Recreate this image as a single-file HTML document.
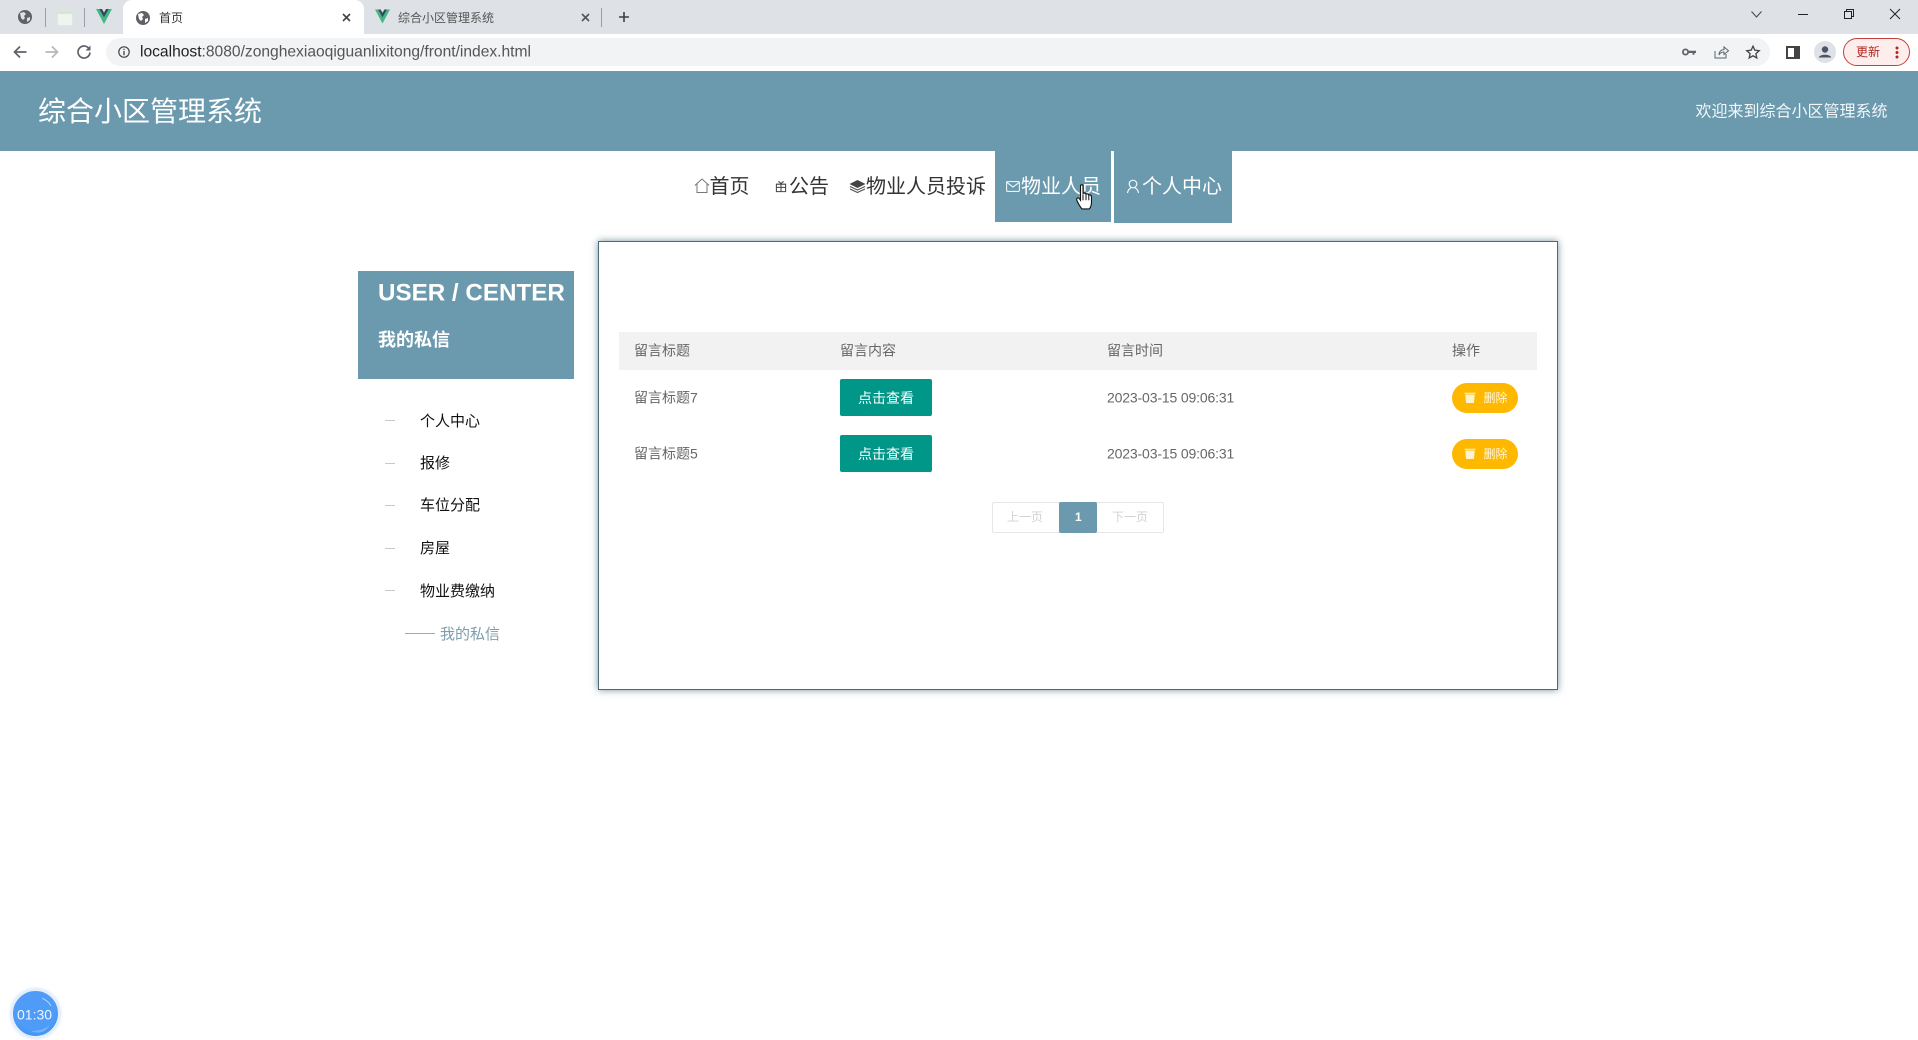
<!DOCTYPE html>
<html lang="zh"><head><meta charset="utf-8"><title>首页</title>
<style>
html,body{margin:0;padding:0;width:1918px;height:1040px;overflow:hidden;background:#fff;}
body{position:relative;font-family:"Liberation Sans","Noto Sans CJK SC",sans-serif;}
.a{position:absolute;white-space:nowrap;}
.t{position:absolute;white-space:nowrap;transform:translateY(-50%);line-height:1.2;}
svg{position:absolute;overflow:visible;}
.btn{position:absolute;left:840px;width:92px;height:37px;background:#009688;border-radius:2px;color:#fff;font-size:14px;line-height:38px;text-align:center;}
.del{position:absolute;left:1452px;width:66px;height:30px;background:#FFB800;border-radius:15px;}
.g{color:#666;font-size:14px;}
.m{color:#111;font-size:15px;}
.dash{position:absolute;left:385px;width:10px;height:1px;background:#c4c9cc;}
</style></head><body>

<!-- tab strip -->
<div class="a" style="left:0;top:0;width:1918px;height:34px;background:#dee1e6"></div>
<svg style="left:18px;top:10px" width="14" height="14" viewBox="0 0 14 14"><circle cx="7" cy="7" r="7" fill="#5f6368"/><path d="M2 3 L6 2 L8 4 L6 6 L7 8 L5 10 L3 8 Z M9 8 L12 7 L12 10 L9 12 Z" fill="#dee1e6"/></svg>
<div class="a" style="left:45px;top:8px;width:1px;height:19px;background:#9aa0a6"></div>
<div class="a" style="left:57px;top:10px;width:14px;height:14px;background:linear-gradient(#d4e6d6 0 3px,#eef5ef 3px);border:1px solid #dfe6e0"></div>
<div class="a" style="left:84px;top:8px;width:1px;height:19px;background:#9aa0a6"></div>
<svg style="left:96px;top:9px" width="16" height="15" viewBox="0 0 16 15"><path d="M0 0 L3.2 0 L8 8.5 L12.8 0 L16 0 L8 15 Z" fill="#41b883"/><path d="M3.2 0 L6 0 L8 3.6 L10 0 L12.8 0 L8 8.5 Z" fill="#35495e"/></svg>

<!-- active tab -->
<div class="a" style="left:123px;top:0;width:241px;height:34px;background:#fff;border-radius:9px 9px 0 0"></div>
<svg style="left:136px;top:11px" width="14" height="14" viewBox="0 0 14 14"><circle cx="7" cy="7" r="7" fill="#5f6368"/><path d="M2 3 L6 2 L8 4 L6 6 L7 8 L5 10 L3 8 Z M9 8 L12 7 L12 10 L9 12 Z" fill="#fff"/></svg>
<div class="t" style="left:159px;top:18px;font-size:12px;color:#333">首页</div>
<svg style="left:342px;top:13px" width="9" height="9" viewBox="0 0 9 9"><path d="M1 1 L8 8 M8 1 L1 8" stroke="#444" stroke-width="1.6"/></svg>

<!-- second tab -->
<svg style="left:375px;top:9px" width="15" height="15" viewBox="0 0 16 15"><path d="M0 0 L3.2 0 L8 8.5 L12.8 0 L16 0 L8 15 Z" fill="#41b883"/><path d="M3.2 0 L6 0 L8 3.6 L10 0 L12.8 0 L8 8.5 Z" fill="#35495e"/></svg>
<div class="t" style="left:398px;top:18px;font-size:12px;color:#555">综合小区管理系统</div>
<svg style="left:581px;top:13px" width="9" height="9" viewBox="0 0 9 9"><path d="M1 1 L8 8 M8 1 L1 8" stroke="#555" stroke-width="1.6"/></svg>
<div class="a" style="left:601px;top:8px;width:1px;height:19px;background:#9aa0a6"></div>
<svg style="left:618px;top:11px" width="12" height="12" viewBox="0 0 12 12"><path d="M6 1 V11 M1 6 H11" stroke="#3c4043" stroke-width="1.6"/></svg>

<!-- window controls -->
<svg style="left:1751px;top:11px" width="11" height="7" viewBox="0 0 11 7"><path d="M.5 .5 L5.5 6 L10.5 .5" fill="none" stroke="#444" stroke-width="1"/></svg>
<div class="a" style="left:1798px;top:14px;width:10px;height:1px;background:#222"></div>
<svg style="left:1844px;top:9px" width="10" height="10" viewBox="0 0 10 10"><path d="M.5 2.5 H7.5 V9.5 H.5 Z M2.5 2.5 V.5 H9.5 V7.5 H7.5" fill="none" stroke="#222" stroke-width="1"/></svg>
<svg style="left:1890px;top:9px" width="10" height="10" viewBox="0 0 10 10"><path d="M0 0 L10 10 M10 0 L0 10" stroke="#222" stroke-width="1"/></svg>

<!-- toolbar -->
<div class="a" style="left:0;top:34px;width:1918px;height:37px;background:#fff"></div>
<svg style="left:13px;top:45px" width="14" height="14" viewBox="0 0 14 14"><path d="M13.5 7 H2 M7 1.5 L1.5 7 L7 12.5" fill="none" stroke="#5f6368" stroke-width="1.7"/></svg>
<svg style="left:45px;top:45px" width="14" height="14" viewBox="0 0 14 14"><path d="M.5 7 H12 M7 1.5 L12.5 7 L7 12.5" fill="none" stroke="#b5b8bc" stroke-width="1.7"/></svg>
<svg style="left:77px;top:45px" width="14" height="14" viewBox="0 0 14 14"><path d="M12.2 4 A6 6 0 1 0 13 7.5" fill="none" stroke="#5f6368" stroke-width="1.7"/><path d="M13.5 .5 V5.5 H8.5 Z" fill="#5f6368"/></svg>
<div class="a" style="left:106px;top:38px;width:1664px;height:28px;background:#f1f3f4;border-radius:14px"></div>
<svg style="left:118px;top:46px" width="12" height="12" viewBox="0 0 12 12"><circle cx="6" cy="6" r="5.2" fill="none" stroke="#444" stroke-width="1.2"/><path d="M6 5 V9.2 M6 2.8 V4" stroke="#444" stroke-width="1.3"/></svg>
<div class="t" style="left:140px;top:52.500px;font-size:15.6px;color:#555"><span style="color:#222">localhost</span>:8080/zonghexiaoqiguanlixitong/front/index.html</div>
<svg style="left:1682px;top:47px" width="14" height="10" viewBox="0 0 14 10"><circle cx="3.5" cy="5" r="2.6" fill="none" stroke="#5f6368" stroke-width="1.8"/><path d="M6 3.8 H14 V6 H12.5 V7.8 H10.5 V6 H6 Z" fill="#5f6368"/></svg>
<svg style="left:1714px;top:44px" width="15" height="15" viewBox="0 0 15 15"><path d="M1 7 V14 H12 V10" fill="none" stroke="#5f6368" stroke-width="1"/><path d="M5 11 C5 7 8 5.500 10 5.500 V3 L14.500 6.800 L10 10.500 V8 C8 8 6 9 5 11 Z" fill="none" stroke="#5f6368" stroke-width="1"/></svg>
<svg style="left:1746px;top:45px" width="14" height="14" viewBox="0 0 14 14"><path d="M7 1.200 L8.800 5.200 L13.200 5.700 L9.900 8.600 L10.800 13 L7 10.800 L3.200 13 L4.100 8.600 L.8 5.700 L5.200 5.200 Z" fill="none" stroke="#444" stroke-width="1.300"/></svg>
<svg style="left:1786px;top:46px" width="14" height="13" viewBox="0 0 14 13"><rect x="1" y="1" width="12" height="11" fill="none" stroke="#444" stroke-width="2"/><rect x="8" y="1" width="5" height="11" fill="#444"/></svg>
<svg style="left:1814px;top:41px" width="22" height="22" viewBox="0 0 22 22"><circle cx="11" cy="11" r="11" fill="#dee1e6"/><circle cx="11" cy="8.500" r="3.200" fill="#4a5568"/><path d="M4.800 16.500 C5.500 12.800 16.500 12.800 17.200 16.500 Z" fill="#4a5568"/></svg>
<div class="a" style="left:1843px;top:38px;width:65px;height:26px;border:1px solid #c5403a;border-radius:14px;background:#fdeeed"></div>
<div class="t" style="left:1856px;top:52px;font-size:12px;color:#b3261e">更新</div>
<svg style="left:1895px;top:46px" width="4" height="13" viewBox="0 0 4 13"><circle cx="2" cy="2" r="1.500" fill="#b3261e"/><circle cx="2" cy="6.500" r="1.500" fill="#b3261e"/><circle cx="2" cy="11" r="1.500" fill="#b3261e"/></svg>

<!-- page header -->
<div class="a" style="left:0;top:71px;width:1918px;height:80px;background:#6b9aae"></div>
<div class="t" style="left:38px;top:111.500px;font-size:28px;color:#fff">综合小区管理系统</div>
<div class="t" style="left:1695.500px;top:112px;font-size:16px;color:#f2f6f8">欢迎来到综合小区管理系统</div>

<!-- nav -->
<div class="a" style="left:995px;top:151px;width:116px;height:71px;background:#6b9aae"></div>
<div class="a" style="left:1114px;top:151px;width:118px;height:72px;background:#6b9aae"></div>
<svg style="left:693.500px;top:178px" width="16" height="16" viewBox="0 0 16 16"><path d="M.8 7.500 L8 1 L15.200 7.500 M3 6 V14.500 H13 V6" fill="none" stroke="#777" stroke-width="1"/></svg>
<div class="t" style="left:709.500px;top:187px;font-size:20px;color:#333">首页</div>
<svg style="left:775px;top:180px" width="12" height="13" viewBox="0 0 13 13"><path d="M1.500 4 H11.500 V12 H1.500 Z M1.500 7.500 H11.500 M6.500 4 V12 M3.500 1.500 C5 1 6 3 6.500 4 C7 3 8 1 9.500 1.500" fill="none" stroke="#444" stroke-width="1.100"/></svg>
<div class="t" style="left:789px;top:187px;font-size:20px;color:#333">公告</div>
<svg style="left:849px;top:179px" width="17" height="15" viewBox="0 0 17 15"><path d="M.5 5 L8.500 1 L16.500 5 L8.500 9 Z" fill="#444"/><path d="M1 7.500 L8.500 11 L16 7.500 M1 10 L8.500 13.500 L16 10" fill="none" stroke="#555" stroke-width="1.200"/></svg>
<div class="t" style="left:866px;top:187px;font-size:20px;color:#333">物业人员投诉</div>
<svg style="left:1006px;top:181px" width="14" height="11" viewBox="0 0 14 11"><rect x=".6" y=".6" width="12.800" height="9.800" rx="1" fill="none" stroke="#e8f4f8" stroke-width="1.100"/><path d="M1 1.500 L7 6 L13 1.500" fill="none" stroke="#e8f4f8" stroke-width="1.100"/></svg>
<div class="t" style="left:1021px;top:187px;font-size:20px;color:#fff">物业人员</div>
<svg style="left:1126px;top:179px" width="14" height="15" viewBox="0 0 14 15"><circle cx="7" cy="5" r="3.800" fill="none" stroke="#f2f8fa" stroke-width="1.200"/><path d="M1.500 14 C2 10.500 4 9.200 5.500 8.500 M12.500 14 C12 10.500 10 9.200 8.500 8.500" fill="none" stroke="#f2f8fa" stroke-width="1.200"/></svg>
<div class="t" style="left:1142px;top:187px;font-size:20px;color:#fff">个人中心</div>

<!-- sidebar -->
<div class="a" style="left:358px;top:271px;width:216px;height:108px;background:#6b9aae"></div>
<div class="t" style="left:378px;top:292.500px;font-size:24.200px;font-weight:700;color:#fff">USER / CENTER</div>
<div class="t" style="left:378px;top:341px;font-size:18px;font-weight:700;color:#fff">我的私信</div>
<div class="dash" style="top:420px"></div><div class="t m" style="left:420px;top:421.500px">个人中心</div>
<div class="dash" style="top:463px"></div><div class="t m" style="left:420px;top:464px">报修</div>
<div class="dash" style="top:505px"></div><div class="t m" style="left:420px;top:506px">车位分配</div>
<div class="dash" style="top:548px"></div><div class="t m" style="left:420px;top:549px">房屋</div>
<div class="dash" style="top:590px"></div><div class="t m" style="left:420px;top:591.500px">物业费缴纳</div>
<div class="a" style="left:405px;top:633px;width:30px;height:1px;background:#8fb0bf"></div>
<div class="t" style="left:440px;top:634.500px;font-size:15px;color:#7f9dab">我的私信</div>

<!-- main box -->
<div class="a" style="left:598px;top:241px;width:958px;height:447px;border:1px solid #4a6a75;box-shadow:0 0 7px rgba(85,120,135,.8);background:#fff"></div>
<div class="a" style="left:619px;top:332px;width:918px;height:38px;background:#f2f2f2"></div>
<div class="t g" style="left:634px;top:351px">留言标题</div>
<div class="t g" style="left:840px;top:351px">留言内容</div>
<div class="t g" style="left:1107px;top:351px">留言时间</div>
<div class="t g" style="left:1452px;top:351px">操作</div>

<div class="t g" style="left:634px;top:398px">留言标题7</div>
<div class="btn" style="top:379px">点击查看</div>
<div class="t g" style="left:1107px;top:398px;letter-spacing:-.15px">2023-03-15 09:06:31</div>
<div class="del" style="top:383px"></div>
<svg style="left:1464px;top:392px" width="12" height="11" viewBox="0 0 12 11"><path d="M.5 1.200 H11.500 M1.800 3 H10.200 L9.500 10.500 H2.500 Z" fill="#fff3cf" stroke="#fff3cf" stroke-width="1"/></svg>
<div class="t" style="left:1483.500px;top:398px;font-size:12px;color:#fff6dc">删除</div>

<div class="t g" style="left:634px;top:454px">留言标题5</div>
<div class="btn" style="top:435px">点击查看</div>
<div class="t g" style="left:1107px;top:454px;letter-spacing:-.15px">2023-03-15 09:06:31</div>
<div class="del" style="top:439px"></div>
<svg style="left:1464px;top:448px" width="12" height="11" viewBox="0 0 12 11"><path d="M.5 1.200 H11.500 M1.800 3 H10.200 L9.500 10.500 H2.500 Z" fill="#fff3cf" stroke="#fff3cf" stroke-width="1"/></svg>
<div class="t" style="left:1483.500px;top:454px;font-size:12px;color:#fff6dc">删除</div>

<!-- pagination -->
<div class="a" style="left:992px;top:502px;width:170px;height:29px;border:1px solid #e6e6e6;border-radius:2px"></div>
<div class="a" style="left:1059px;top:502px;width:38px;height:31px;background:#6b9aae;border-radius:2px"></div>
<div class="t" style="left:1007px;top:517px;font-size:12px;color:#d2d2d2">上一页</div>
<div class="t" style="left:1075px;top:517px;font-size:12px;color:#fff;font-weight:700">1</div>
<div class="t" style="left:1112px;top:517px;font-size:12px;color:#d2d2d2">下一页</div>

<!-- hand cursor -->
<svg style="left:1076px;top:184px" width="17" height="26" viewBox="0 0 17 24" preserveAspectRatio="none"><path d="M4.500 1.800 C4.500 .4 7 .4 7 1.800 V9 C7.500 8 9.500 8 10 9.500 C10.500 8.700 12.300 8.800 12.800 10.300 C13.500 9.700 15.500 10 15.500 12 V17 C15.500 20 14 22.800 13 23 H6 C4.500 21.500 1.500 17 .8 15 C.3 13 2 12 3.300 13.500 L4.500 15 Z" fill="#fff" stroke="#111" stroke-width="1.100"/><path d="M7 9.500 V15 M10 9.500 V15 M12.800 10.500 V15" stroke="#111" stroke-width="1"/></svg>

<!-- timer -->
<div class="a" style="left:11px;top:989px;width:49px;height:49px;border-radius:50%;background:radial-gradient(circle at 50% 40%,#4e9cf8 0 60%,#3f90f3 85%,#6fb4f8 100%);border:2px solid #e4eefa;box-sizing:border-box;box-shadow:0 0 3px rgba(120,170,230,.5)"></div>
<svg style="left:11px;top:989px" width="49" height="49" viewBox="0 0 49 49"><path d="M31 9 C35 11 38 13 40 17" fill="none" stroke="#a9d2fd" stroke-width="1"/><path d="M20 42 C28 42 34 40 39 36 C36 42 28 46 20 42 Z" fill="#8cc4fb" opacity=".6"/></svg>
<div class="t" style="left:17px;top:1014.500px;font-size:14px;color:#eef6ff">01:30</div>

</body></html>
